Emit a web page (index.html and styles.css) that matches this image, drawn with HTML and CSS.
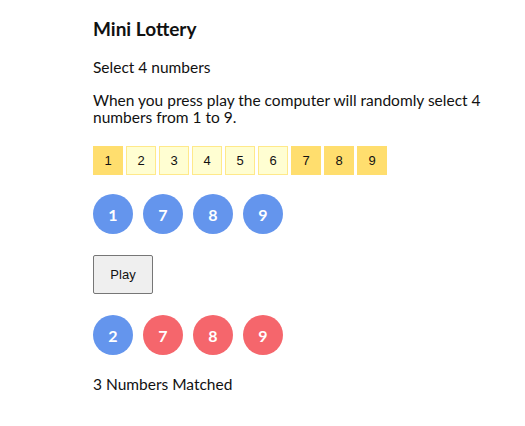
FILE: index.html
```html
<!DOCTYPE html>
<html>
<head>
<meta charset="utf-8">
<link rel="stylesheet" href="styles.css">
</head>
<body>
<div class="app">
  <h1 class="title">Mini Lottery</h1>
  <p class="text">Select 4 numbers</p>
  <p class="text">When you press play the computer will randomly select 4 numbers from 1 to 9.</p>
  <div class="picker">
    <div class="box sel">1</div>
    <div class="box">2</div>
    <div class="box">3</div>
    <div class="box">4</div>
    <div class="box">5</div>
    <div class="box">6</div>
    <div class="box sel">7</div>
    <div class="box sel">8</div>
    <div class="box sel">9</div>
  </div>
  <div class="balls">
    <div class="ball blue">1</div>
    <div class="ball blue">7</div>
    <div class="ball blue">8</div>
    <div class="ball blue">9</div>
  </div>
  <button class="play">Play</button>
  <div class="balls">
    <div class="ball blue">2</div>
    <div class="ball red">7</div>
    <div class="ball red">8</div>
    <div class="ball red">9</div>
  </div>
  <p class="text result">3 Numbers Matched</p>
</div>
</body>
</html>
```
FILE: styles.css
```css
html, body {
  margin: 0;
  padding: 0;
  background: #fff;
}
body {
  font-family: Lato, "Liberation Sans", sans-serif;
  color: #111;
}
.app {
  width: 420px;
  padding: 17px 0 0 93px;
  display: flex;
  flex-direction: column;
  align-items: flex-start;
}
.title {
  font-size: 19px;
  font-weight: 700;
  line-height: 24px;
  margin: 0 0 18px 0;
}
.text {
  font-size: 15.5px;
  line-height: 17px;
  margin: 0 0 16px 0;
}
.picker {
  display: flex;
  gap: 3px;
  margin: 4px 0 19px 0;
}
.box {
  width: 28px;
  height: 27px;
  border: 1px solid #ffe98a;
  background: #fffed2;
  font-family: "Liberation Sans", Arial, sans-serif;
  font-size: 13px;
  display: flex;
  align-items: center;
  justify-content: center;
  color: #111;
}
.box.sel {
  background: #ffde6e;
  border-color: #ffde6e;
}
.balls {
  display: flex;
  gap: 10px;
}
.ball {
  width: 40px;
  height: 40px;
  border-radius: 50%;
  color: #fff;
  font-size: 16px;
  font-weight: 700;
  display: flex;
  align-items: center;
  justify-content: center;
}
.blue { background: #6495ed; }
.red { background: #f5666c; }
.play {
  margin: 21px 0 21px 0;
  width: 60px;
  height: 39px;
  font-family: "Liberation Sans", Arial, sans-serif;
  font-size: 13px;
  background: #efefef;
  border: 1px solid #767676;
  border-radius: 2px;
  color: #111;
}
.result {
  margin-top: 21px;
}
```
